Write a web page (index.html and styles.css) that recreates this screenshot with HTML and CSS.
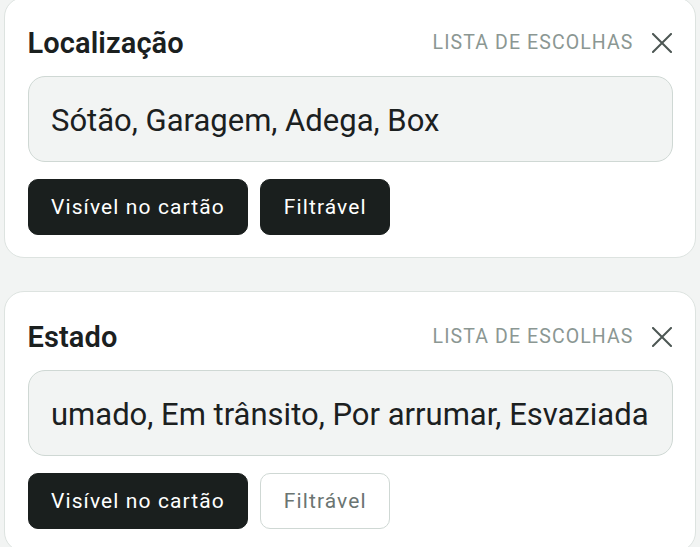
FILE: index.html
```html
<!DOCTYPE html>
<html lang="pt">
<head>
<meta charset="utf-8">
<title>Campos</title>
<link rel="stylesheet" href="styles.css">
</head>
<body>
<div class="list">
  <section class="card">
    <div class="card-head">
      <h2 class="title">Localização</h2>
      <div class="head-right">
        <span class="kind">LISTA DE ESCOLHAS</span>
        <svg class="close" viewBox="0 0 20 20" width="20" height="20"><path d="M1 1 L19 19 M19 1 L1 19" stroke="#4d5754" stroke-width="2" fill="none" stroke-linecap="square"/></svg>
      </div>
    </div>
    <div class="field"><span class="field-text">Sótão, Garagem, Adega, Box</span></div>
    <div class="toggles">
      <span class="toggle on">Visível no cartão</span>
      <span class="toggle on">Filtrável</span>
    </div>
  </section>
  <section class="card">
    <div class="card-head">
      <h2 class="title">Estado</h2>
      <div class="head-right">
        <span class="kind">LISTA DE ESCOLHAS</span>
        <svg class="close" viewBox="0 0 20 20" width="20" height="20"><path d="M1 1 L19 19 M19 1 L1 19" stroke="#4d5754" stroke-width="2" fill="none" stroke-linecap="square"/></svg>
      </div>
    </div>
    <div class="field"><span class="field-text">umado, Em trânsito, Por arrumar, Esvaziada</span></div>
    <div class="toggles">
      <span class="toggle on">Visível no cartão</span>
      <span class="toggle off">Filtrável</span>
    </div>
  </section>
</div>
</body>
</html>
```
FILE: styles.css
```css
html, body {
  margin: 0;
  padding: 0;
  background: #f2f4f3;
  font-family: Roboto, "Noto Sans", "Liberation Sans", sans-serif;
  color: #1b201f;
  overflow: hidden;
}
.list {
  display: flex;
  flex-direction: column;
  gap: 33px;
  padding: 0 4px;
  margin-top: -3px;
}
.card {
  background: #ffffff;
  border: 1.5px solid #dde3e0;
  border-radius: 20px;
  padding: 22.5px 22.5px 22.5px;
  display: flex;
  flex-direction: column;
}
.card-head {
  height: 44px;
  display: flex;
  align-items: center;
  justify-content: space-between;
}
.title {
  margin: 0;
  font-size: 29px;
  font-weight: 600;
  color: #1b201f;
  letter-spacing: 0.1px;
}
.head-right {
  display: flex;
  align-items: center;
  gap: 18px;
  padding-right: 1px;
}
.kind {
  font-size: 19.5px;
  letter-spacing: 1.1px;
  color: #8b9793;
}
.close {
  display: block;
}
.field {
  margin-top: 11px;
  height: 86px;
  box-sizing: border-box;
  border: 1.5px solid #cfd8d4;
  border-radius: 17px;
  background: #f2f4f3;
  padding: 4px 22.5px 0;
  display: flex;
  align-items: center;
  overflow: hidden;
}
.field-text {
  font-size: 31px;
  color: #1b201f;
  white-space: nowrap;
}
.toggles {
  margin-top: 17px;
  display: flex;
  gap: 12px;
}
.toggle {
  height: 56px;
  box-sizing: border-box;
  border-radius: 10px;
  padding: 1px 22.5px 0;
  display: flex;
  align-items: center;
  font-size: 21px;
  letter-spacing: 1.1px;
  border: 1.5px solid transparent;
}
.toggle.on {
  background: #1a1f1e;
  border-color: #1a1f1e;
  color: #ffffff;
}
.toggle.off {
  background: #ffffff;
  border-color: #cfd8d4;
  color: #6b7572;
}
```
